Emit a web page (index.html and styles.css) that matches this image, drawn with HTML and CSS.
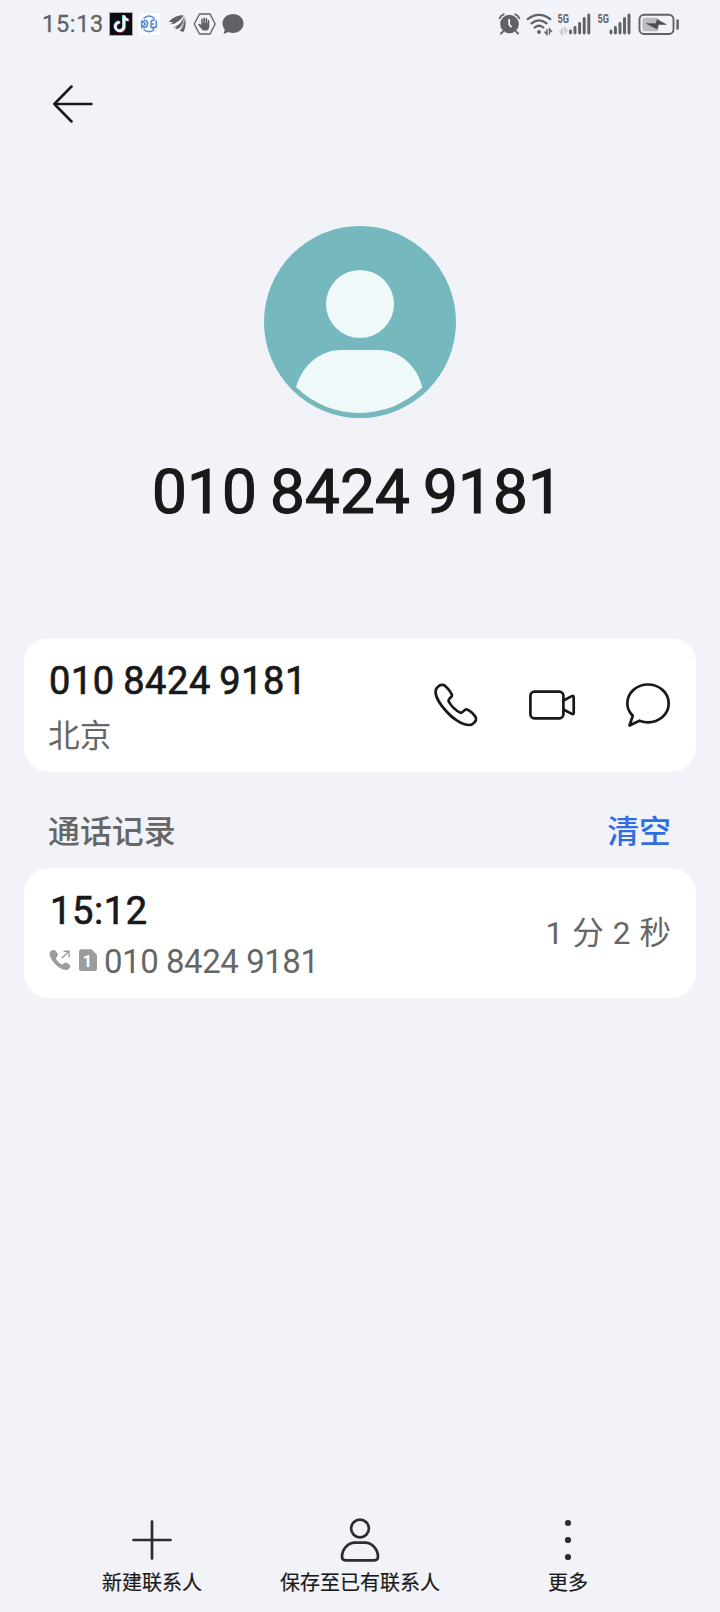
FILE: index.html
```html
<!DOCTYPE html>
<html lang="zh-CN">
<head>
<meta charset="utf-8">
<title>通话详情</title>
<link rel="stylesheet" href="styles.css">
</head>
<body>
<div class="screen">
  <div class="status">
    <span class="clock">15:13</span>
    <svg class="status-left" width="136" height="24" viewBox="109 12 136 24">
      <rect x="109.5" y="12.5" width="23" height="23" fill="#0c0b14" stroke="#aaa"/>
      <g fill="none" stroke-width="2.5">
        <path d="M119.700 22.300a4.300 4.300 0 1 0 4.300 4.300V15.500c.2 2.700 1.800 4.200 4.400 4.400" stroke="#ef3558" transform="translate(.7 .5)"/>
        <path d="M119.700 22.300a4.300 4.300 0 1 0 4.300 4.300V15.500c.2 2.700 1.800 4.200 4.400 4.400" stroke="#43dce0" transform="translate(-.7 -.5)"/>
        <path d="M119.700 22.300a4.300 4.300 0 1 0 4.300 4.300V15.500c.2 2.700 1.800 4.200 4.400 4.400" stroke="#fff"/>
      </g>
      <rect x="138" y="13" width="22" height="22" rx="2" fill="#fafbfd"/>
      <g fill="none" stroke="#4a86cf" stroke-width="1.500">
        <path d="M143.500 18.500Q149 13.500 154.500 18.500M143.500 29.500Q149 34 154.500 29.500M142 20.500L145.500 24L142 27.500Q141 24 142 20.500M144 20.500C148 20 148.500 24 147 26Q145.500 28 143.500 27.500M156 20.500Q157 24 156 27.500L152.500 27M155 20C151.500 19.500 150 22 151.500 24L154 24M151.500 24Q149.500 28 154 28.500"/>
      </g>
      <g fill="#616266">
        <path d="M168.800 21.800C174 16.500 178 15.500 183.500 15.300C181 21 175.500 24.500 169.500 24.300C171.500 23.800 172.500 23 173 22.300Z"/>
        <path d="M173 27.500C179.500 25.500 182.500 21 184 16C186 23 182 29 174.500 29.500C176 28.800 176.500 28.200 176.800 27.600Z"/>
        <path d="M179.300 31C183.500 27.500 185 22 184.600 16.500C187 23 185 31 182.500 32.600C182.500 31.500 182 31 179.300 31Z"/>
      </g>
      <path d="M176 23q5-2 8-7M179 28.500q5-4 5.300-11" fill="none" stroke="#f1f3f8" stroke-width=".7"/>
      <path d="M199.500 14h10.500l5.200 10-5.200 10h-10.500l-5.200-10z" fill="none" stroke="#616266" stroke-width="1.400" stroke-linejoin="round"/>
      <path d="M203 30.500l-4.600-5.200c-.8-1 .5-1.900 1.500-1.200l1.300 1V19.500c0-1.200 1.600-1.200 1.600 0v3.500h.5v-4.600c0-1.200 1.700-1.200 1.700 0V23h.5v-4c0-1.200 1.700-1.200 1.700 0v4h.5v-2.400c0-1.200 1.600-1.200 1.600 0V26c0 2-.8 3.500-2 4.500z" fill="#616266"/>
      <path d="M233 14c5.800 0 10.500 4 10.500 9.500s-4.700 9.500-10.500 9.500c-1.700 0-3.300-.3-4.600-1l-4.900 2 1.300-4.600c-1.500-1.600-2.300-3.700-2.300-5.900C222.500 18 227.200 14 233 14z" fill="#616266"/>
    </svg>
    <svg class="status-right" width="184" height="24" viewBox="498 12 184 24">
      <g fill="none" stroke="#616266">
        <circle cx="509.500" cy="24" r="9.300" fill="#616266" stroke="none"/>
        <path d="M499.700 18.200q1-3 4-3.900M519.300 18.200q-1-3-4-3.900M503 31.500l-2 2M516 31.500l2 2" stroke-width="1.900" stroke-linecap="round"/>
        <path d="M509.200 19v5.500l2.300 2.800" stroke="#fff" stroke-width="1.700"/>
        <path d="M527.800 19q11.200-8.200 22.400 0M531.500 23.400q7.500-6 15 0M534.700 27.500q4.300-3.500 8.600 0" stroke-width="2.200" stroke-linecap="round"/>
        <circle cx="539" cy="32" r="1.900" fill="#616266" stroke="none"/>
        <path d="M547 29v5.500l-2.500-3M549.500 34.500V29l2.400 3" stroke-width="1.400"/>
        <path d="M562 28v6l-2.500-3.400M565 34v-6l2.500 3.400" stroke="#c6c7cb" stroke-width="1.500"/>
        <path d="M570.500 33v-2M575 33v-5.500M579.600 33V23.500M584.200 33V18.500M588.800 33V15M611 33v-2M615.400 33v-5.500M620 33V23.500M624.500 33V18.500M629 33V15" stroke-width="2.900" stroke-linecap="round"/>
        <rect x="639.500" y="14.800" width="34" height="19.200" rx="4.500" stroke-width="1.900"/>
        <rect x="642.500" y="17.800" width="16" height="13.400" rx="2" fill="#bbbcc0" stroke="none"/>
        <path d="M646.500 23.500l9.500.2 1.200-4.200 9 5-7.800-.1-1.300 4.700z" fill="#4d4e51" stroke="#4d4e51" stroke-width=".6"/>
        <path d="M677.600 19.500v10" stroke-width="2.500"/>
      </g>
      <g class="net"><text x="557.500" y="22.500" textLength="11.500" lengthAdjust="spacingAndGlyphs">5G</text><text x="597.500" y="22.500" textLength="11.500" lengthAdjust="spacingAndGlyphs">5G</text></g>
    </svg>
  </div>

  <header class="topbar">
    <svg width="40" height="40" viewBox="53 84 40 40"><path d="M71.500 86.500L54.300 104l17.200 17.500M54.500 104H91.500" fill="none" stroke="#191919" stroke-width="2.500" stroke-linecap="round" stroke-linejoin="round"/></svg>
  </header>

  <section class="profile">
    <svg width="192" height="192" viewBox="264 226 192 192">
      <circle cx="360" cy="322" r="96" fill="#75b8be"/>
      <circle cx="360" cy="304" r="34" fill="#f0f9f9"/>
      <path d="M296 387C303 363 322 350 341 350H378C400 350 417 366 422.300 387.500A90.500 90.500 0 0 1 296 387Z" fill="#f0f9f9"/>
    </svg>
    <h1 class="title">010 8424 9181</h1>
  </section>

  <section class="card contact">
    <div>
      <div class="number">010 8424 9181</div>
      <div class="place">北京</div>
    </div>
    <div class="actions">
      <svg width="46" height="46" viewBox="433 682 46 46"><path d="M438.500 686.300C440 684.700 443.200 684.200 445 685.800C448 688.500 450.500 691.500 452 694.700C452.500 697 448 698.500 448.500 701C450.500 705.500 456 711 460.500 712.800C463 713 464.500 709 466.500 709.300C470 710.500 474.500 714.500 476 718C476.800 721 472.800 725 469.500 725C462 725 452.500 718.500 446.500 711.500C439.500 704 435 695.500 435.700 690.500C436 688.700 437 687.500 438.500 686.300Z"/></svg>
      <svg width="48" height="46" viewBox="528 682 48 46"><rect x="530.400" y="691.700" width="33" height="26.600" rx="4"/><path d="M563.500 700.500L571.800 696.100Q573.700 695.200 573.700 697V713Q573.700 714.800 571.800 713.900L563.500 709.500"/></svg>
      <svg width="46" height="46" viewBox="625 682 46 46"><path d="M648 684.500C659 684.500 668.700 692.500 668.700 703.500S659 722.300 648 722.300C645 722.300 642.500 721.800 639.500 720.700L629.500 725.500L632.800 715.800C629.500 712.500 627.300 708.500 627.300 703.500C627.300 692.500 637 684.500 648 684.500Z"/></svg>
    </div>
  </section>

  <div class="section-head"><span>通话记录</span><span class="clear">清空</span></div>

  <section class="card record">
    <div>
      <div class="time">15:12</div>
      <div class="detail">
        <svg width="52" height="24" viewBox="48 948 52 24">
          <path d="M50.300 951.500C52 949.500 54.500 949.500 55.800 951L57.800 954C58.500 955.500 56 957 56 958.500C57 961.500 60 963.500 62 964.500C63.500 964.500 64.500 962 66.500 962.500L69.300 964.500C71.500 966.300 69.500 969.500 66.500 970C61.500 970.300 56 965.500 53 961.500C50.500 958 48.500 954 50.300 951.500Z" fill="#9c9c9c"/>
          <path d="M61.800 958.200l7-7M63.500 951.300h5.600v6" fill="none" stroke="#9c9c9c" stroke-width="1.400"/>
          <path d="M81.500 949.300h10l5.500 5.500v13.700a2.500 2.500 0 0 1-2.500 2.500h-13a2.500 2.500 0 0 1-2.500-2.500v-16.700a2.500 2.500 0 0 1 2.500-2.500z" fill="#9c9c9c"/>
          <text class="sim" x="87.500" y="966.700">1</text>
        </svg>
        <span class="small">010 8424 9181</span>
      </div>
    </div>
    <div class="duration">1 分 2 秒</div>
  </section>

  <nav class="bottom">
    <div class="item">
      <svg width="44" height="46" viewBox="130 1517 44 46"><path d="M152 1521.500V1558.500M133.500 1540H170.500"/></svg>
      <span>新建联系人</span>
    </div>
    <div class="item">
      <svg width="44" height="46" viewBox="338 1517 44 46"><circle cx="360" cy="1528.500" r="8.900"/><path d="M355 1542.700H365C372.500 1542.700 378 1550 378 1556.500Q378 1560.300 374.500 1560.300H345.500Q342 1560.300 342 1556.500C342 1550 347.500 1542.700 355 1542.700Z"/></svg>
      <span>保存至已有联系人</span>
    </div>
    <div class="item">
      <svg width="44" height="46" viewBox="546 1517 44 46"><g class="dots"><circle cx="568" cy="1523" r="3.100"/><circle cx="568" cy="1540" r="3.100"/><circle cx="568" cy="1557" r="3.100"/></g></svg>
      <span>更多</span>
    </div>
  </nav>
</div>
</body>
</html>
```
FILE: styles.css
```css
* { box-sizing: border-box; }
body { margin: 0; background: #f1f3f8; font-family: Roboto, "Noto Sans CJK SC", sans-serif; color: #191919; }
svg { display: block; flex: none; }
.screen { width: 720px; height: 1612px; display: flex; flex-direction: column; overflow: hidden; }

.status { height: 48px; display: flex; align-items: center; padding: 0 38px 0 42px; }
.clock { width: 67px; font-size: 23.500px; line-height: 28px; letter-spacing: .700px; color: #616266; white-space: nowrap; -webkit-text-stroke: .3px; }
.status-right { margin-left: auto; }
.net { font: 700 12.500px Roboto, sans-serif; fill: #616266; }

.topbar { height: 112px; display: flex; align-items: center; padding-left: 53px; }

.profile { height: 478px; padding-top: 66px; display: flex; flex-direction: column; align-items: center; }
.title { margin: 39px 0 0; padding-right: 5px; font-size: 62px; line-height: 70px; font-weight: 400; letter-spacing: .150px; word-spacing: -2.500px; white-space: nowrap; -webkit-text-stroke: 1.200px; }

.card { flex: none; margin: 0 24px; padding: 0 25px; background: #fff; border-radius: 25px; display: flex; justify-content: space-between; }
.contact { height: 134px; padding-top: 21px; }
.number { font-size: 38px; line-height: 44px; letter-spacing: .550px; word-spacing: -1.500px; white-space: nowrap; -webkit-text-stroke: .7px; }
.place { margin-top: 8px; margin-left: -1px; font: 31.700px/44px "Noto Sans CJK SC", sans-serif; color: #666; }
.actions { height: 46px; display: flex; gap: 49px; margin-top: 23px; }
.actions svg { fill: none; stroke: #191919; stroke-width: 2.700px; stroke-linejoin: round; stroke-linecap: round; }

.section-head { height: 96px; padding: 33px 49px 0 48px; display: flex; justify-content: space-between; font: 500 31.900px/48px "Noto Sans CJK SC", sans-serif; color: #666; }
.clear { color: #2f6de5; }

.record { height: 130px; padding-top: 21px; }
.time { font-size: 38px; line-height: 44px; letter-spacing: .600px; padding-left: 1px; -webkit-text-stroke: .7px; }
.detail { display: flex; align-items: center; height: 40px; margin-top: 8px; margin-left: -1px; }
.detail svg { margin-top: -2px; }
.small { margin-left: 4px; padding-top: 1px; font-size: 33px; line-height: 40px; letter-spacing: -.450px; color: #666; white-space: nowrap; }
.sim { font: 700 17px Roboto, sans-serif; fill: #fff; text-anchor: middle; }
.duration { margin-top: 21px; font: 31.500px/48px Roboto, "Noto Sans CJK SC", sans-serif; color: #666; white-space: nowrap; word-spacing: 1.200px; }

.bottom { margin-top: auto; height: 95px; padding: 0 48px; display: grid; grid-template-columns: repeat(3, 208px); }
.item { display: flex; flex-direction: column; align-items: center; font: 400 20px/30px "Noto Sans CJK SC", sans-serif; white-space: nowrap; }
.item svg { fill: none; stroke: #2d2d2d; stroke-width: 2.700px; stroke-linecap: round; stroke-linejoin: round; }
.item .dots { fill: #2d2d2d; stroke: none; }
.item span { margin-top: 4px; -webkit-text-stroke: .2px; }
```
